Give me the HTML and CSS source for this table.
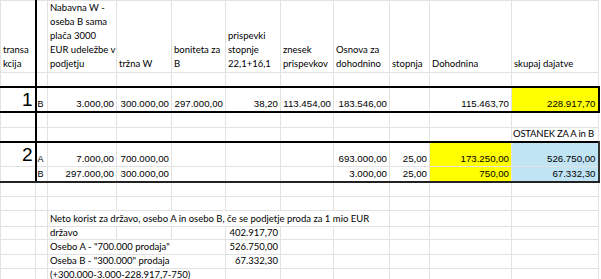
FILE: index.html
```html
<!DOCTYPE html>
<html lang="sl">
<head>
<meta charset="utf-8">
<link rel="stylesheet" href="styles.css">
</head>
<body>
<table class="sheet">
<colgroup>
<col class="w35"><col class="w12"><col class="w69"><col class="w55"><col class="w54"><col class="w55"><col class="w53"><col class="w56"><col class="w40"><col class="w82"><col class="w87">
</colgroup>
<tbody>
<tr class="r-head">
<td class="sep">transa<br>kcija</td>
<td></td>
<td>Nabavna W -<br>oseba B sama<br>plača 3000<br>EUR udeležbe v<br>podjetju</td>
<td>tržna W</td>
<td>boniteta za<br>B</td>
<td>prispevki<br>stopnje<br>22,1+16,1</td>
<td>znesek<br>prispevkov</td>
<td>Osnova za<br>dohodnino</td>
<td>stopnja</td>
<td>Dohodnina</td>
<td>skupaj dajatve</td>
</tr>
<tr class="r-14">
<td class="sep"></td><td></td><td></td><td></td><td></td><td></td><td></td><td></td><td></td><td></td><td></td>
</tr>
<tr class="r-24 box box1">
<td class="sep big">1</td>
<td class="ab">B</td>
<td class="num">3.000,00</td>
<td class="num">300.000,00</td>
<td class="num">297.000,00</td>
<td class="num">38,20</td>
<td class="num">113.454,00</td>
<td class="num">183.546,00</td>
<td></td>
<td class="num">115.463,70</td>
<td class="num yellow endb">228.917,70</td>
</tr>
<tr class="r-15">
<td class="sep"></td><td></td><td></td><td></td><td></td><td></td><td></td><td></td><td></td><td></td><td></td>
</tr>
<tr class="r-14">
<td class="sep"></td><td></td><td></td><td></td><td></td><td></td><td></td><td></td><td></td><td></td>
<td class="caps">OSTANEK ZA A in B</td>
</tr>
<tr class="r-24 box box-top">
<td class="sep big">2</td>
<td class="ab">A</td>
<td class="num">7.000,00</td>
<td class="num">700.000,00</td>
<td></td><td></td><td></td>
<td class="num">693.000,00</td>
<td class="num">25,00</td>
<td class="num yellow">173.250,00</td>
<td class="num blue end2">526.750,00</td>
</tr>
<tr class="r-15 box-bottom">
<td class="sep"></td>
<td class="ab">B</td>
<td class="num">297.000,00</td>
<td class="num">300.000,00</td>
<td></td><td></td><td></td>
<td class="num">3.000,00</td>
<td class="num">25,00</td>
<td class="num yellow">750,00</td>
<td class="num blue end2">67.332,30</td>
</tr>
<tr class="r-14">
<td></td><td></td><td></td><td></td><td></td><td></td><td></td><td></td><td></td><td></td><td></td>
</tr>
<tr class="r-14">
<td></td><td></td><td></td><td></td><td></td><td></td><td></td><td></td><td></td><td></td><td></td>
</tr>
<tr class="r-16">
<td></td><td></td>
<td colspan="6">Neto korist za državo, osebo A in osebo B, če se podjetje proda za 1 mio EUR</td>
<td></td><td></td><td></td>
</tr>
<tr class="r-13">
<td></td><td></td>
<td>državo</td><td></td><td></td>
<td class="rt">402.917,70</td>
<td></td><td></td><td></td><td></td><td></td>
</tr>
<tr class="r-15">
<td></td><td></td>
<td colspan="3">Osebo A - "700.000 prodaja"</td>
<td class="rt">526.750,00</td>
<td></td><td></td><td></td><td></td><td></td>
</tr>
<tr class="r-14">
<td></td><td></td>
<td colspan="3">Oseba B - "300.000" prodaja</td>
<td class="rt">67.332,30</td>
<td></td><td></td><td></td><td></td><td></td>
</tr>
<tr class="r-14">
<td></td><td></td>
<td colspan="3">(+300.000-3.000-228.917,7-750)</td>
<td></td>
<td></td><td></td><td></td><td></td><td></td>
</tr>
</tbody>
</table>
</body>
</html>
```

FILE: styles.css
```css
html, body {
  margin: 0;
  padding: 0;
  background: #ffffff;
}

.sheet {
  border-collapse: collapse;
  table-layout: fixed;
  width: 598px;
  font-family: "Lato", "Liberation Sans", sans-serif;
  font-size: 9.5px;
  color: #000;
}

.w35 { width: 35px; }
.w12 { width: 12px; }
.w69 { width: 69px; }
.w55 { width: 55px; }
.w54 { width: 54px; }
.w53 { width: 53px; }
.w56 { width: 56px; }
.w40 { width: 40px; }
.w82 { width: 82px; }
.w87 { width: 87px; }

.sheet td {
  border: 1px solid #e2e2e2;
  padding: 0 2px 1px 2px;
  vertical-align: bottom;
  white-space: nowrap;
  overflow: hidden;
  line-height: 12px;
  text-align: left;
}

.r-head td { height: 70px; line-height: 14px; }
.r-13 td { height: 11px; line-height: 11px; }
.r-14 td { height: 12px; }
.r-15 td { height: 13px; }
.r-16 td { height: 14px; }
.r-24 td { height: 22px; }

.sheet td.sep {
  border-right: 2px solid #000;
}

.sheet tr.box td {
  border-top: 2px solid #000;
}
.sheet tr.box1 td {
  border-bottom: 2px solid #000;
}
.sheet tr.box-bottom td {
  border-bottom: 2px solid #222;
}

.sheet td.num {
  font-family: "Liberation Sans", Arial, sans-serif;
  font-size: 9.7px;
  text-align: right;
}

.sheet td.rt {
  text-align: right;
}

.sheet td.caps {
  padding-left: 1px;
  letter-spacing: -0.2px;
}

.sheet td.ab {
  font-family: "Liberation Sans", Arial, sans-serif;
  font-size: 9px;
  padding-left: 1px;
  padding-right: 0;
}

.sheet td.big {
  font-family: "Liberation Sans", Arial, sans-serif;
  font-size: 19px;
  line-height: 20px;
  text-align: right;
  padding-right: 2px;
}

.sheet td.yellow { background: #ffff00; }
.sheet td.blue { background: #c1e4f5; }

.sheet td.endb { border-right: 2px solid #000; }
.sheet td.end2 { border-right: 2px solid #333; }
```
